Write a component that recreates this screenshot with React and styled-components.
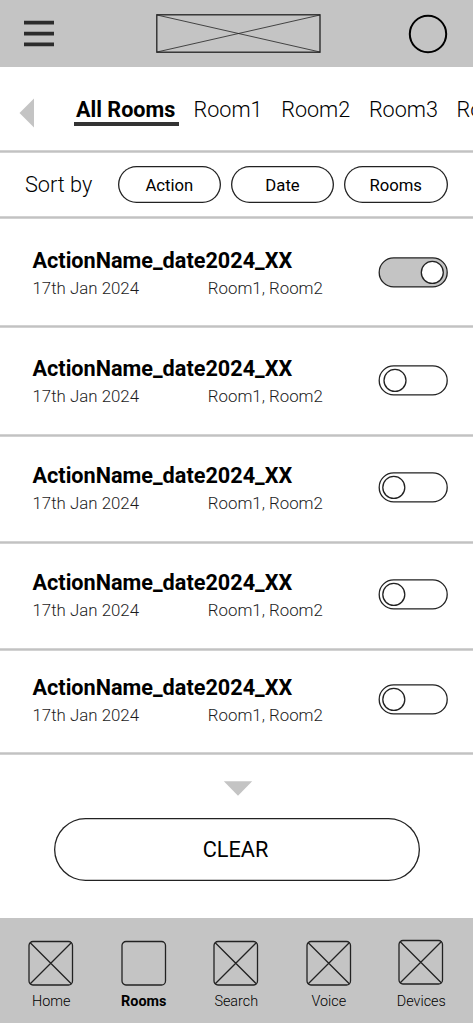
import styled, { createGlobalStyle } from "styled-components";

const colors = {
  gray: "#c4c4c4",
  line: "#222222",
  dark: "#2c2c2c",
  white: "#ffffff",
  black: "#000000",
};

const tabs = ["All Rooms", "Room1", "Room2", "Room3", "Room4"];
const filters = ["Action", "Date", "Rooms"];

const actions = [
  { id: 1, on: true, height: 106, top: 29, toggleTop: 37.7, knob: 54.3 },
  { id: 2, on: false, height: 106, top: 28, toggleTop: 37, knob: 17 },
  { id: 3, on: false, height: 104, top: 26, toggleTop: 35.2, knob: 15.8 },
  { id: 4, on: false, height: 104, top: 26, toggleTop: 35, knob: 15.8 },
  { id: 5, on: false, height: 101, top: 24, toggleTop: 32.7, knob: 15.8 },
];

const navItems = [
  { name: "Home" },
  { name: "Rooms", active: true },
  { name: "Search" },
  { name: "Voice" },
  { name: "Devices", raised: true },
];

function Toggle({ on, knob, top }) {
  return (
    <ToggleButton role="switch" aria-checked={on} $top={top}>
      <svg width="70" height="31">
        <rect x="1.2" y="0.9" width="68" height="29" rx="14.5" fill={on ? colors.gray : colors.white} stroke={colors.line} strokeWidth="1.3" />
        <circle cx={knob} cy="15.4" r="11" fill={colors.white} stroke={colors.line} strokeWidth="1.3" />
      </svg>
    </ToggleButton>
  );
}

function ActionRow({ action }) {
  return (
    <Row $height={action.height}>
      <Info $top={action.top}>
        <Title>ActionName_date2024_XX</Title>
        <Details>
          <span>17th Jan 2024</span>
          <span>Room1, Room2</span>
        </Details>
      </Info>
      <Toggle on={action.on} knob={action.knob} top={action.toggleTop} />
    </Row>
  );
}

function NavIcon({ active, raised }) {
  return (
    <svg width="46" height="46">
      <g transform={raised ? "translate(0 -1)" : undefined} fill="none" stroke={colors.line} strokeWidth="1.3">
        <rect x="1" y="1.5" width="43.5" height="43.5" rx="4" />
        {!active && <path d="M2 2.5L43.5 44M43.5 2.5L2 44" />}
      </g>
    </svg>
  );
}

function App() {
  return (
    <Screen>
      <GlobalStyle />
      <Header>
        <svg width="30" height="28">
          <path d="M0 2.7H30M0 13.6H30M0 24.4H30" stroke={colors.dark} strokeWidth="3.7" />
        </svg>
        <Logo width="165" height="39">
          <g fill="none" stroke={colors.line}>
            <rect x="0.8" y="0.8" width="163.2" height="37.4" strokeWidth="1.3" />
            <path d="M1 1L164 38M164 1L1 38" strokeWidth="0.8" />
          </g>
        </Logo>
        <svg width="40" height="40">
          <circle cx="20" cy="20" r="18.2" fill="none" stroke={colors.black} strokeWidth="2" />
        </svg>
      </Header>
      <Tabs>
        <Back>
          <svg width="15" height="30">
            <path d="M15 0.5V29.5L0.5 15Z" fill={colors.gray} />
          </svg>
        </Back>
        {tabs.map((tab, i) => (
          <Tab key={tab} $active={i === 0}>{tab}</Tab>
        ))}
      </Tabs>
      <Divider />
      <SortBar>
        <SortLabel>Sort by</SortLabel>
        {filters.map((filter) => (
          <Chip key={filter}>{filter}</Chip>
        ))}
      </SortBar>
      <Divider />
      {actions.map((action) => (
        <div key={action.id}>
          <ActionRow action={action} />
          <Divider />
        </div>
      ))}
      <Footer>
        <svg width="30" height="15">
          <path d="M0.8 0.3H29.2L15 14.7Z" fill={colors.gray} />
        </svg>
        <ClearButton>CLEAR</ClearButton>
      </Footer>
      <Nav>
        {navItems.map((item) => (
          <NavItem key={item.name} $active={item.active}>
            <NavIcon active={item.active} raised={item.raised} />
            <span>{item.name}</span>
          </NavItem>
        ))}
      </Nav>
    </Screen>
  );
}

const GlobalStyle = createGlobalStyle`
  * {
    box-sizing: border-box;
  }
  body {
    margin: 0;
    background-color: ${colors.white};
    font-family: Roboto, "Liberation Sans", sans-serif;
    overflow: hidden;
  }
  svg {
    display: block;
    flex-shrink: 0;
    overflow: visible;
  }
  button {
    border: none;
    padding: 0;
    background: none;
    font-family: inherit;
  }
`
const Screen = styled.div`
  display: flex;
  flex-direction: column;
  width: 472.5px;
  height: 1024px;
  overflow: hidden;
`
const Header = styled.header`
  display: flex;
  align-items: center;
  height: 67px;
  padding: 0 25px 0 24px;
  background-color: ${colors.gray};
`
const Logo = styled.svg`
  margin: 0 87px 0 102px;
`
const Tabs = styled.nav`
  display: flex;
  align-items: flex-start;
  height: 83px;
  padding: 28px 0 0 19px;
  overflow: hidden;
`
const Back = styled.div`
  padding-top: 3px;
  margin-right: 39.5px;
`
const Tab = styled.div`
  flex-shrink: 0;
  width: ${({ $active }) => ($active ? "105.5px" : "87.7px")};
  height: 31px;
  margin-right: ${({ $active }) => ($active ? "14.5px" : "0")};
  padding-left: ${({ $active }) => ($active ? "2.5px" : "0")};
  border-bottom: ${({ $active }) => ($active ? "4px solid #333333" : "none")};
  font-size: 21.6px;
  line-height: 30px;
  font-weight: ${({ $active }) => ($active ? 700 : 300)};
`
const Divider = styled.div`
  height: 3px;
  flex-shrink: 0;
  background: linear-gradient(#d2d2d2 1px, #c2c2c2 1px 2px, #d2d2d2 2px);
`
const SortBar = styled.div`
  display: flex;
  align-items: center;
  gap: 9.5px;
  height: 63px;
  padding-left: 25px;
`
const SortLabel = styled.span`
  width: 83px;
  font-size: 21.7px;
  line-height: 26px;
  font-weight: 300;
`
const Chip = styled.button`
  width: 103.7px;
  height: 37px;
  padding-top: 1px;
  border-radius: 19px;
  box-shadow: inset 0 0 0 1.3px ${colors.line};
  color: ${colors.black};
  font-size: 16.7px;
`
const Row = styled.div`
  display: flex;
  justify-content: space-between;
  height: ${({ $height }) => $height}px;
  padding: 0 25px 0 32.5px;
`
const Info = styled.div`
  padding-top: ${({ $top }) => $top}px;
`
const Title = styled.h2`
  margin: 0;
  font-size: 21.65px;
  line-height: 26px;
  font-weight: 700;
`
const Details = styled.div`
  display: grid;
  grid-template-columns: 175.3px auto;
  margin-top: 4px;
  color: #1c1c1c;
  font-size: 16.85px;
  line-height: 20px;
  font-weight: 300;
`
const ToggleButton = styled.button`
  align-self: flex-start;
  margin-top: ${({ $top }) => $top}px;
`
const Footer = styled.div`
  display: flex;
  flex-direction: column;
  align-items: center;
  height: 163px;
  padding: 26px 0 0 3px;
`
const ClearButton = styled.button`
  width: 366px;
  height: 62.5px;
  margin: 22px 1.5px 0 0;
  padding-right: 3px;
  border-radius: 31.5px;
  box-shadow: inset 0 0 0 1.3px ${colors.line};
  color: ${colors.black};
  font-size: 21.7px;
`
const Nav = styled.nav`
  display: flex;
  justify-content: space-between;
  height: 105px;
  padding: 22px 5px 0;
  background-color: ${colors.gray};
`
const NavItem = styled.div`
  display: flex;
  flex-direction: column;
  align-items: center;
  gap: 7px;
  width: 92.5px;
  font-size: 14.4px;
  line-height: 18px;
  font-weight: ${({ $active }) => ($active ? 700 : 300)};
`

export default App;
